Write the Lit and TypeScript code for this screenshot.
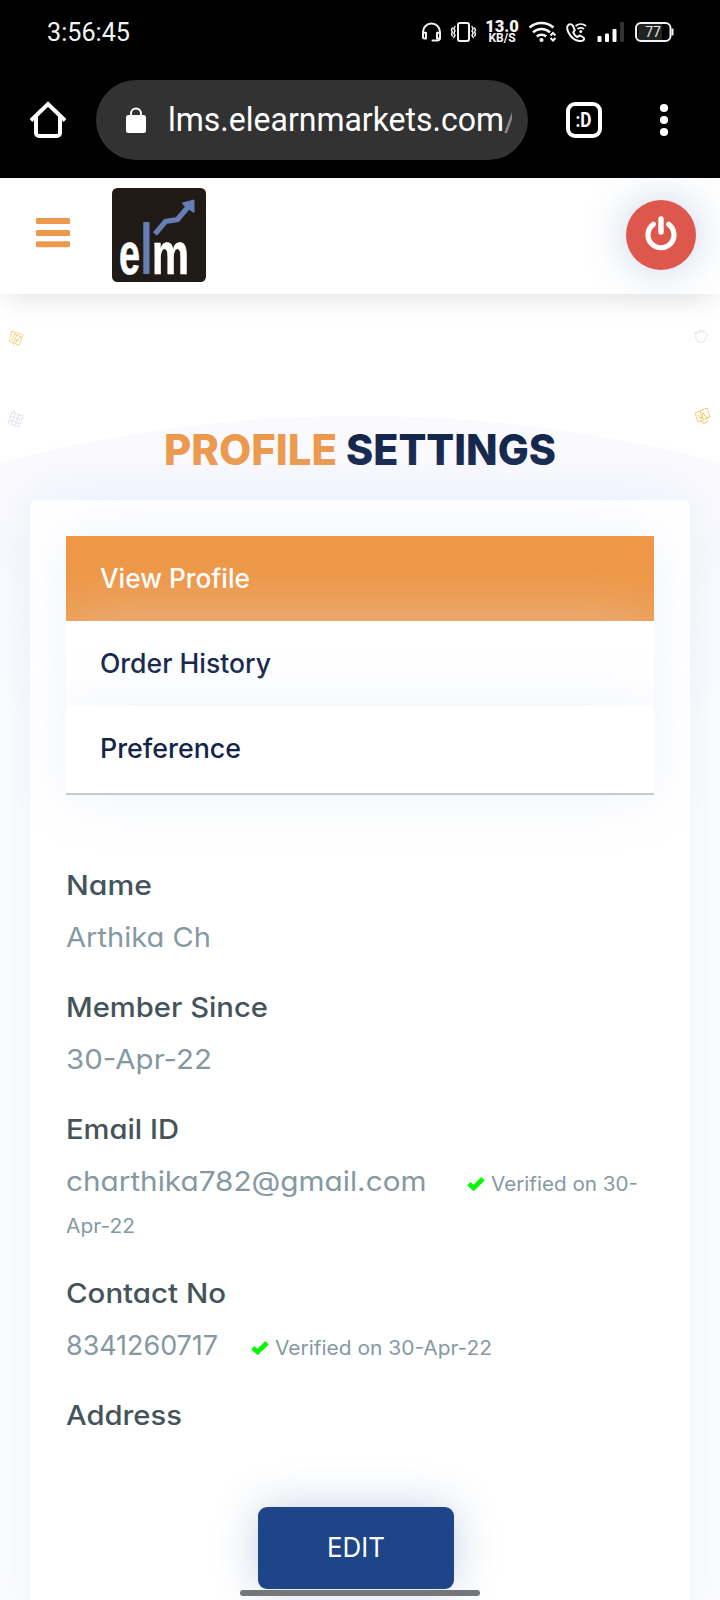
import { LitElement, html, css, svg } from "lit";
import { customElement, property, state } from "lit/decorators.js";

/** Text whose glyphs are widened or narrowed so that its line takes exactly `w` pixels. */
@customElement("fit-text")
class FitText extends LitElement {
  static styles = css`
    :host { display: inline-block; white-space: pre; text-align: left; }
    .line { display: inline-block; transform-origin: 0 50%; }
  `;
  @property() text = "";
  @property({ type: Number }) w = 0;
  @state() private natural = 0;

  firstUpdated() {
    this.natural = this.renderRoot.querySelector("span")!.getBoundingClientRect().width;
  }

  render() {
    const n = this.natural || this.w;
    return html`<span class="line" style="transform:scaleX(${this.w / n});margin-right:${this.w - n}px">${this.text}</span>`;
  }
}

interface Field {
  label: string;
  lw: number;
  value?: string;
  vw?: number;
  gap?: number;
  note?: string;
  nw?: number;
  rest?: string;
  rw?: number;
}

const FIELDS: Field[] = [
  { label: "Name", lw: 86, value: "Arthika Ch", vw: 145 },
  { label: "Member Since", lw: 202, value: "30-Apr-22", vw: 146 },
  { label: "Email ID", lw: 113, value: "charthika782@gmail.com", vw: 360.5, gap: 40, note: "Verified on 30-", nw: 147, rest: "Apr-22", rw: 69 },
  { label: "Contact No", lw: 160, value: "8341260717", vw: 152, gap: 32.5, note: "Verified on 30-Apr-22", nw: 217 },
  { label: "Address", lw: 116 },
];

const check = html`<svg class="check" width="18" height="14" viewBox="0 0 18 14">
  <path d="M1.800 6.800 L6.600 11 L16 1.800" fill="none" stroke="#0af50a" stroke-width="4.800" />
</svg>`;

const statusIcons = svg`
  <g fill="none" stroke="#f2f2f2" stroke-width="2" stroke-linecap="round" stroke-linejoin="round">
    <path d="M4 17 V12 a8.500 8.500 0 0 1 17 0 V17.500 a3 3 0 0 1 -3 3 H13.500" />
    <path d="M4 12.800 h3 v5.700 h-1.500 a1.500 1.500 0 0 1 -1.500 -1.500 z M21 12.800 h-3 v5.700 h1.500 a1.500 1.500 0 0 0 1.500 -1.500 z" />
    <rect x="39" y="3" width="11" height="18" rx="2" />
    <path d="M36 6.500 l-1.200 2.200 l1.200 2.200 l-1.200 2.200 l1.200 2.200 l-1.200 2.200 M33.300 8 l-.8 2 l.8 2 l-.8 2 l.8 2 M53 6.500 l1.200 2.200 l-1.200 2.200 l1.200 2.200 l-1.200 2.200 l1.200 2.200 M55.700 8 l.8 2 l-.8 2 l.8 2 l-.8 2" stroke-width="1.500" />
  </g>`;

@customElement("app-root")
class AppRoot extends LitElement {
  static styles = css`
    :host {
      display: block;
      position: relative;
      width: 720px;
      height: 1600px;
      overflow: hidden;
      background: #fff;
      font-family: Inter, "Noto Sans", sans-serif;
      font-feature-settings: "cv11";
    }
    * { box-sizing: border-box; }
    svg { display: block; flex: none; overflow: visible; }

    .device { background: #000; height: 178px; color: #f4f4f4; font-family: Roboto, sans-serif; }
    .status { height: 80px; padding: 20px 45px 0 46.500px; display: flex; justify-content: space-between; align-items: flex-start; }
    .clock { font-size: 25.500px; line-height: 24px; }
    .tray { display: flex; height: 24px; }
    .rate { width: 34px; margin: 0 10px 0 9px; text-align: center; font-weight: 700; font-family: Roboto, sans-serif; }
    .rate b { display: block; font-size: 16.500px; line-height: 13px; }
    .rate i { display: block; font-style: normal; font-size: 12px; line-height: 11px; font-weight: 700; }

    .browser { height: 80px; display: flex; align-items: center; padding-left: 28px; }
    .pill { width: 432px; height: 80px; margin: 0 36px 0 28px; border-radius: 40px; background: #323232; display: flex; align-items: center; padding: 0 16px 0 30px; }
    .url { flex: 1; margin-left: 22px; overflow: hidden; white-space: nowrap; font-size: 32.500px; line-height: 42px; color: #fff; }
    .slash { color: #8a8a8a; }
    .dots { margin-left: 48px; }

    .bar { position: relative; z-index: 2; height: 116px; background: #fff; box-shadow: 0 14px 26px -8px rgba(0, 0, 0, .11); display: flex; align-items: center; padding: 0 24px 0 36px; }
    .burger { margin-top: -6px; }
    .logo { margin: -2px auto 0 42px; }
    .power { width: 70px; height: 70px; border-radius: 50%; background: #dd574d; box-shadow: 0 0 44px rgba(40, 80, 160, .26); display: grid; place-items: center; margin-top: -2px; }
    .power svg { margin-top: -3px; }

    .page { position: relative; height: 1306px; }
    .backdrop { position: absolute; inset: 0; }
    .title { position: relative; margin: 0; padding: 125px 0 0 163.500px; height: 206px; font-size: 43px; line-height: 60px; font-weight: 800; color: #14264c; display: flex; gap: 9px; }
    .title .accent { color: #ec994c; }

    .card { position: relative; width: 660px; height: 1140px; margin-left: 30px; padding: 36px; background: #fff; border-radius: 6px; box-shadow: 0 0 60px rgba(216, 224, 248, .46); }
    .item { position: relative; height: 85px; padding-left: 33.500px; line-height: 84px; font-size: 26.500px; font-weight: 500; color: #14254a; background: #fff; box-shadow: 0 0 60px rgba(220, 227, 250, .46); }
    .item.active { background: #ee9847; color: #fff; }
    .item.last { height: 89px; border-bottom: 2px solid #bccddc; }

    .fields { margin-top: 65px; }
    .field { margin-bottom: 18px; }
    .label { height: 52px; line-height: 51px; font-size: 27.500px; font-weight: 500; color: #45545a; }
    .value { height: 52px; line-height: 50px; font-size: 27.500px; color: #8499a2; display: flex; align-items: baseline; }
    .check { margin-right: 6px; }
    .note { font-size: 19.500px; }
    .rest { height: 42px; line-height: 36px; font-size: 19.500px; color: #8499a2; }
    .edit { display: block; width: 196px; height: 82px; margin: 65px 0 0 192px; padding: 0 0 2px; border: 0; border-radius: 9px; background: #1d4587; color: #fff; font: 400 27.500px/78px Inter, sans-serif; text-align: center; box-shadow: 0 0 44px rgba(40, 80, 160, .26); }
    .gesture { position: absolute; left: 240px; top: 1590px; width: 240px; height: 6px; border-radius: 3px; background: #757678; }
  `;

  private device() {
    return html`<div class="device">
      <div class="status">
        <div class="clock"><fit-text text="3:56:45" w="83"></fit-text></div>
        <div class="tray">
          <svg width="57" height="24" viewBox="0 0 57 24">${statusIcons}</svg>
          <div class="rate"><b>13.0</b><i>KB/S</i></div>
          <svg width="146" height="24" viewBox="0 0 146 24">
            <g fill="none" stroke="#f4f4f4" stroke-width="2.500">
              <path d="M.5 7.500 a18 18 0 0 1 24 0" />
              <path d="M4 12.300 a12.500 12.500 0 0 1 17 0" />
              <path d="M7.800 16.500 a7 7 0 0 1 9.400 0" />
              <path d="M21.500 15.500 l2.500 -2.500 l2.500 2.500 M21.500 18 l2.500 2.500 l2.500 -2.500" stroke-width="2" />
              <g transform="translate(1.500 0)">
                <path d="M38.500 4.500 c-2.500 1.500 -2 5 -.5 8 c2 4 6 8 11 8.500 c3.500 .5 5.500 -1.500 4 -3.500 l-3.500 -2 l-2.800 1.500 c-2 -1 -3.200 -2.700 -4 -4.700 l1.600 -2.200 l-2 -4.600 q-1.500 -2 -3.800 -1 z" stroke-width="2" stroke-linejoin="round" />
                <path d="M45 6 a8.500 8.500 0 0 1 10.500 0 M47 9 a5.500 5.500 0 0 1 6.500 0" stroke-width="1.800" />
              </g>
            </g>
            <circle cx="12.500" cy="20" r="2.100" fill="#f4f4f4" />
            <circle cx="51.800" cy="11.500" r="1.500" fill="#f4f4f4" />
            <g fill="#fff">
              <rect x="68.500" y="16" width="4" height="6" rx="1" />
              <rect x="76" y="13.500" width="4" height="8.500" rx="1" />
              <rect x="83.500" y="9" width="4" height="13" rx="1" />
              <rect x="91" y="2" width="4" height="20" rx="1" fill="#333" />
            </g>
            <rect x="109" y="4" width="24" height="16" fill="#222" />
            <rect x="107" y="3" width="34.500" height="18" rx="5" fill="none" stroke="#f4f4f4" stroke-width="2" />
            <rect x="142.500" y="8.500" width="2" height="7" fill="#f4f4f4" />
            <text x="124" y="17" fill="#e8e8e8" font-size="14" text-anchor="middle">77</text>
          </svg>
        </div>
      </div>
      <div class="browser">
        <svg width="40" height="40" viewBox="0 0 40 40">
          <path d="M3 20.500 L20 4 L37 20.500 M8 17 V33 a3 3 0 0 0 3 3 H29 a3 3 0 0 0 3 -3 V17" fill="none" stroke="#fff" stroke-width="4" />
        </svg>
        <div class="pill">
          <svg width="20" height="26" viewBox="0 0 20 26">
            <rect y="8" width="20" height="18" rx="2.500" fill="#fff" />
            <path d="M5 9 V6.500 a5 5 0 0 1 10 0 V9" fill="none" stroke="#fff" stroke-width="2" />
          </svg>
          <div class="url"><fit-text text="lms.elearnmarkets.com" w="336"></fit-text><span class="slash">/</span></div>
        </div>
        <svg width="40" height="40" viewBox="0 0 40 40">
          <rect x="4" y="4" width="32" height="32" rx="7" fill="none" stroke="#fff" stroke-width="4" />
          <text x="19.500" y="27" fill="#fff" font-size="20" font-weight="700" text-anchor="middle" textLength="16" lengthAdjust="spacingAndGlyphs">:D</text>
        </svg>
        <svg class="dots" width="24" height="36" viewBox="0 0 24 36">
          <g fill="#fff"><circle cx="12" cy="6" r="4.100" /><circle cx="12" cy="18" r="4.100" /><circle cx="12" cy="30" r="4.100" /></g>
        </svg>
      </div>
    </div>`;
  }

  private header() {
    return html`<div class="bar">
      <svg class="burger" width="34" height="30" viewBox="0 0 34 30">
        <g fill="#ec994c"><rect y="0" width="34" height="6" rx="1.200" /><rect y="12" width="34" height="6" rx="1.200" /><rect y="23.300" width="34" height="6" rx="1.200" /></g>
      </svg>
      <svg class="logo" width="94" height="94" viewBox="0 0 94 94">
        <rect width="94" height="94" rx="5.500" fill="#211b18" />
        <rect x="31.300" y="34" width="6.200" height="52" fill="#667db5" />
        <path d="M43 46 L53.500 33.500 L65.500 31.500 L76 19" fill="none" stroke="#667db5" stroke-width="5.200" />
        <path d="M70.500 15 L82 12 L82 24.500 L79 22.500 L72 17.500 Z" fill="#667db5" stroke="#667db5" stroke-linejoin="round" />
        <g fill="#fff" stroke="#fff" stroke-width=".7" font-family="Liberation Sans" font-weight="700" font-size="59">
          <text x="7" y="85.500" textLength="21" lengthAdjust="spacingAndGlyphs">e</text>
          <text x="40" y="85.500" textLength="37" lengthAdjust="spacingAndGlyphs">m</text>
        </g>
      </svg>
      <div class="power">
        <svg width="34" height="36" viewBox="0 0 34 36">
          <path d="M9.300 8.300 A13 13 0 1 0 24.700 8.300" fill="none" stroke="#fff" stroke-width="5.200" stroke-linecap="round" />
          <path d="M17 3 V16" fill="none" stroke="#fff" stroke-width="5.400" stroke-linecap="round" />
        </svg>
      </div>
    </div>`;
  }

  private backdrop() {
    return html`<svg class="backdrop" width="720" height="1306" viewBox="0 0 720 1306">
      <defs>
        <linearGradient id="haze" x1="0" y1="0" x2="0" y2="1">
          <stop offset="0" stop-color="#f9f9fe" /><stop offset=".3" stop-color="#fefeff" /><stop offset="1" stop-color="#fefeff" />
        </linearGradient>
      </defs>
      <path d="M0 169 A1402 1402 0 0 1 720 169 V1306 H0 Z" fill="url(#haze)" />
      <g fill="none" stroke-width="1.100" stroke-dasharray="2 .6">
        <path transform="translate(0 6)" stroke="#f1cf74" d="M12 31 l11 4 l-4 10 l-10 -4 z M15 34 l-3 5 l4 3 l5 -5 z M13 42 l1 4 M17 35 l-2 4 l3 2" />
        <path transform="translate(0 -2)" stroke="#dcdff4" d="M12 120 l11 4 l-4 11 l-11 -4 z M15 122 l-4 10 M19 123 l-4 11 M11 124 l10 4 M10 128 l10 4 M14 118 v3" />
        <path transform="translate(0 1)" stroke="#dfe3f1" d="M696 38 q-1 7 3 9 q4 1 6 -2 q4 -6 0 -8 q-5 -1 -9 1 z M699 37 q2 -4 5 -1 M694 37 l3 2" />
        <path transform="translate(0 4)" stroke="#eec75c" d="M695 115 l12 -5 l3 9 l-12 5 z M698 117 l3 4 l2 -6 l4 5 M702 123 l2 3 l4 -3 M700 113 l3 8" />
      </g>
    </svg>`;
  }

  private field(f: Field) {
    return html`<div class="field">
      <div class="label"><fit-text .text=${f.label} .w=${f.lw}></fit-text></div>
      ${f.value
        ? html`<div class="value">
            <fit-text .text=${f.value} .w=${f.vw!}></fit-text>
            ${f.note
              ? html`<span style="width:${f.gap}px"></span>${check}<fit-text class="note" .text=${f.note} .w=${f.nw!}></fit-text>`
              : ""}
          </div>`
        : ""}
      ${f.rest ? html`<div class="rest"><fit-text .text=${f.rest} .w=${f.rw!}></fit-text></div>` : ""}
    </div>`;
  }

  render() {
    return html`
      ${this.device()} ${this.header()}
      <div class="page">
        ${this.backdrop()}
        <h1 class="title">
          <fit-text class="accent" text="PROFILE" w="173"></fit-text>
          <fit-text text="SETTINGS" w="210"></fit-text>
        </h1>
        <div class="card">
          <div class="menu">
            <div class="item active"><fit-text text="View Profile" w="150"></fit-text></div>
            <div class="item"><fit-text text="Order History" w="171"></fit-text></div>
            <div class="item last"><fit-text text="Preference" w="141"></fit-text></div>
          </div>
          <div class="fields">${FIELDS.map((f) => this.field(f))}</div>
          <button class="edit"><fit-text text="EDIT" w="58"></fit-text></button>
        </div>
      </div>
      <div class="gesture"></div>
    `;
  }
}
